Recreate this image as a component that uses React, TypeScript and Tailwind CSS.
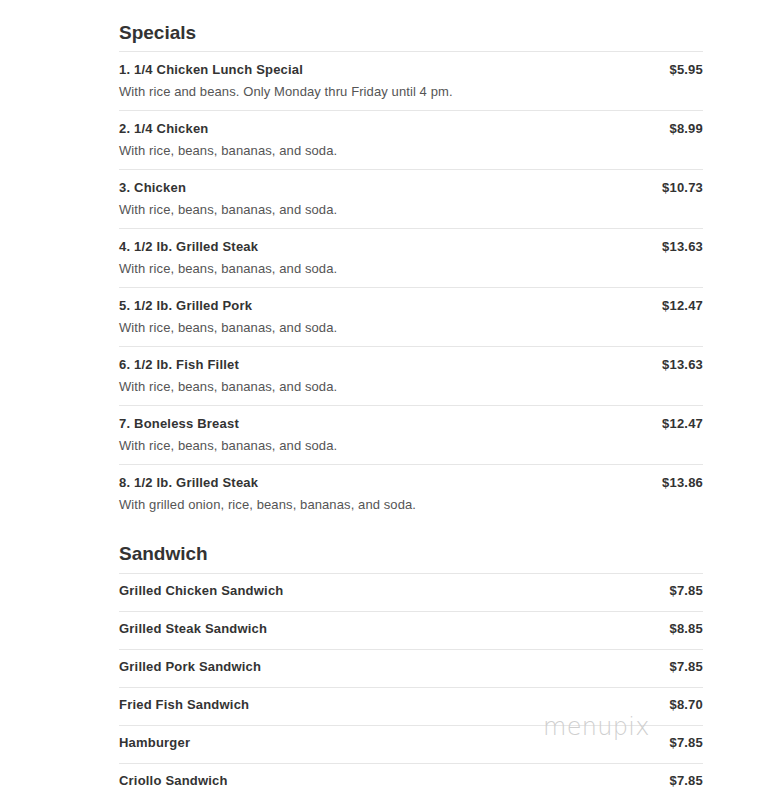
const specials = [
  { name: '1. 1/4 Chicken Lunch Special', desc: 'With rice and beans. Only Monday thru Friday until 4 pm.', price: '$5.95' },
  { name: '2. 1/4 Chicken', desc: 'With rice, beans, bananas, and soda.', price: '$8.99' },
  { name: '3. Chicken', desc: 'With rice, beans, bananas, and soda.', price: '$10.73' },
  { name: '4. 1/2 lb. Grilled Steak', desc: 'With rice, beans, bananas, and soda.', price: '$13.63' },
  { name: '5. 1/2 lb. Grilled Pork', desc: 'With rice, beans, bananas, and soda.', price: '$12.47' },
  { name: '6. 1/2 lb. Fish Fillet', desc: 'With rice, beans, bananas, and soda.', price: '$13.63' },
  { name: '7. Boneless Breast', desc: 'With rice, beans, bananas, and soda.', price: '$12.47' },
  { name: '8. 1/2 lb. Grilled Steak', desc: 'With grilled onion, rice, beans, bananas, and soda.', price: '$13.86' },
]

const sandwiches = [
  { name: 'Grilled Chicken Sandwich', price: '$7.85' },
  { name: 'Grilled Steak Sandwich', price: '$8.85' },
  { name: 'Grilled Pork Sandwich', price: '$7.85' },
  { name: 'Fried Fish Sandwich', price: '$8.70' },
  { name: 'Hamburger', price: '$7.85' },
  { name: 'Criollo Sandwich', price: '$7.85' },
]

export default function App() {
  return (
    <div className="relative min-h-screen bg-white font-['Liberation_Sans',Arial,sans-serif] text-[#333]">
      <div className="ml-[119px] w-[584px] pt-[19px]">
        {/* Specials */}
        <h2 className="text-[19px] font-bold leading-[28px] mb-[4px]">Specials</h2>
        {specials.map((item) => (
          <div key={item.name} className="border-t border-[#e6e6e6] pt-[8px] pb-[8px]">
            <div className="flex justify-between text-[13px] font-bold leading-[20px] tracking-[0.2px]">
              <span>{item.name}</span>
              <span>{item.price}</span>
            </div>
            <p className="mt-[2px] text-[13px] leading-[20px] tracking-[0.1px] text-[#555]">{item.desc}</p>
          </div>
        ))}

        {/* Sandwich */}
        <h2 className="mt-[17px] text-[19px] font-bold leading-[28px] mb-[5px]">Sandwich</h2>
        {sandwiches.map((item) => (
          <div
            key={item.name}
            className="flex justify-between border-t border-[#e6e6e6] pt-[7px] pb-[10px] text-[13px] font-bold leading-[20px] tracking-[0.2px]"
          >
            <span>{item.name}</span>
            <span>{item.price}</span>
          </div>
        ))}
      </div>

      {/* watermark */}
      <div className="absolute left-[543px] top-[712px] font-['DejaVu_Sans',sans-serif] text-[24px] font-extralight leading-[30px] tracking-[0.3px] text-[#cfcfcf]">
        menupix
      </div>
    </div>
  )
}
